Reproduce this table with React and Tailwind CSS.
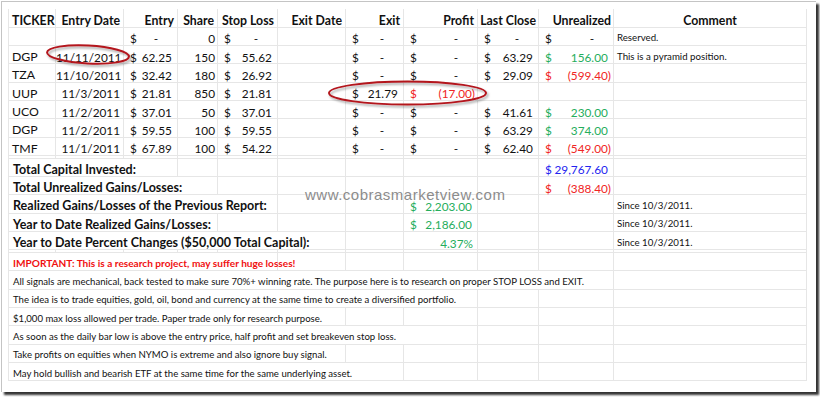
import React from 'react';

const GREEN = 'text-[#25ad5c]';
const RED = 'text-[#f02424]';
const BLUE = 'text-[#2424f0]';

const cols = ['w-[47px]', 'w-[68px]', 'w-[54px]', 'w-[40px]', 'w-[60px]', 'w-[68px]', 'w-[58px]', 'w-[74px]', 'w-[61px]', 'w-[75px]', 'w-[193px]'];

const rows = [
  { t: '', d: '', entry: 0, share: '0', stop: 0, exit: 0, profit: 0, last: 0, unr: 0, comment: 'Reserved.' },
  { t: 'DGP', d: '11/11/2011', entry: '62.25', share: '150', stop: '55.62', exit: 0, profit: 0, last: '63.29', unr: '156.00', unrColor: GREEN, comment: 'This is a pyramid position.' },
  { t: 'TZA', d: '11/10/2011', entry: '32.42', share: '180', stop: '26.92', exit: 0, profit: 0, last: '29.09', unr: '(599.40)', unrColor: RED },
  { t: 'UUP', d: '11/3/2011', entry: '21.81', share: '850', stop: '21.81', exit: '21.79', profit: '(17.00)', profitColor: RED, last: null, unr: null },
  { t: 'UCO', d: '11/2/2011', entry: '37.01', share: '50', stop: '37.01', exit: 0, profit: 0, last: '41.61', unr: '230.00', unrColor: GREEN },
  { t: 'DGP', d: '11/2/2011', entry: '59.55', share: '100', stop: '59.55', exit: 0, profit: 0, last: '63.29', unr: '374.00', unrColor: GREEN },
  { t: 'TMF', d: '11/1/2011', entry: '67.89', share: '100', stop: '54.22', exit: 0, profit: 0, last: '62.40', unr: '(549.00)', unrColor: RED },
];

// accounting style: "$" flush left, value flush right, zero shown as a dash
const Money = ({ v, color = '' }) => {
  if (v === null || v === undefined) return null;
  const neg = typeof v === 'string' && v.startsWith('(');
  return (
    <div className={`flex justify-between pl-[6px] pr-[2px] font-normal text-[11.8px] ${color}`}>
      <span>$</span>
      {v === 0 ? (
        <span>-<span className="invisible">00)</span></span>
      ) : (
        <span>{v}{!neg && <span className="invisible">)</span>}</span>
      )}
    </div>
  );
};

const Td = ({ children, className = '', span }) => (
  <td colSpan={span} className={`border border-[#e6e6e6] align-bottom pb-0 leading-none whitespace-nowrap ${className}`}>
    {children}
  </td>
);

const Empty = ({ n }) => Array.from({ length: n }).map((_, i) => <Td key={i} />);

const Sep = () => (
  <tr className="h-[2.6px]">
    {cols.map((_, i) => (
      <td key={i} className="border border-[#e6e6e6] p-0 text-[0px] leading-[0]" />
    ))}
  </tr>
);

const notes = [
  { text: 'All signals are mechanical, back tested to make sure 70%+ winning rate. The purpose here is to research on proper STOP LOSS and EXIT.', span: 10 },
  { text: 'The idea is to trade equities, gold, oil, bond and currency at the same time to create a diversified portfolio.', span: 8 },
  { text: '$1,000 max loss allowed per trade. Paper trade only for research purpose.', span: 6 },
  { text: 'As soon as the daily bar low is above the entry price, half profit and set breakeven stop loss.', span: 8 },
  { text: 'Take profits on equities when NYMO is extreme and also ignore buy signal.', span: 6 },
  { text: 'May hold bullish and bearish ETF at the same time for the same underlying asset.', span: 7 },
];

export default function App() {
  return (
    <div className="relative w-[820px] h-[397px] bg-white overflow-hidden font-['Lato',sans-serif] text-[#111]">
      <div className="ml-[1px] mt-[1px] w-[815px] h-[391px] bg-white border-t border-l border-[#c4c4c4] shadow-[3px_3px_2px_rgba(0,0,0,0.8)] pl-[6px] pt-[7px]">
        <table className="table-fixed border-collapse w-[798px] text-[11.8px]">
          <colgroup>
            {cols.map((c, i) => <col key={i} className={c} />)}
          </colgroup>
          <tbody>
            <tr className="h-[18.3px] font-bold text-[12.3px]">
              <Td className="border-t-0 text-left pl-[3px]">TICKER</Td>
              <Td className="border-t-0 text-right pr-[3px]">Entry Date</Td>
              <Td className="border-t-0 text-right pr-[3px]">Entry</Td>
              <Td className="border-t-0 text-right pr-[3px]">Share</Td>
              <Td className="border-t-0 text-right pr-[3px]">Stop Loss</Td>
              <Td className="border-t-0 text-right pr-[3px]">Exit Date</Td>
              <Td className="border-t-0 text-right pr-[3px]">Exit</Td>
              <Td className="border-t-0 text-right pr-[3px]">Profit</Td>
              <Td className="border-t-0 text-right pr-[2px]">Last Close</Td>
              <Td className="border-t-0 text-right pr-[2px]">Unrealized</Td>
              <Td className="border-t-0 text-center">Comment</Td>
            </tr>
            {rows.map((r, i) => (
              <tr key={i} className="h-[18.33px]">
                <Td className="pl-[3px] text-[12.3px]">{r.t}</Td>
                <Td className="text-right pr-[3px]">{r.d}</Td>
                <Td><Money v={r.entry} /></Td>
                <Td className="text-right pr-[2px]">{r.share}</Td>
                <Td><Money v={r.stop} /></Td>
                <Td />
                <Td><Money v={r.exit} /></Td>
                <Td><Money v={r.profit} color={r.profitColor} /></Td>
                <Td><Money v={r.last} /></Td>
                <Td><Money v={r.unr} color={r.unrColor} /></Td>
                <Td className="pl-[3px] pb-[2px] text-[9.7px]">{r.comment}</Td>
              </tr>
            ))}
            <Sep />
            <tr className="h-[18.33px] font-bold text-[12.5px]">
              <Td span={3} className="pl-[4px]">Total Capital Invested:</Td>
              <Empty n={6} />
              <Td><Money v="29,767.60" color={BLUE} /></Td>
              <Td />
            </tr>
            <tr className="h-[18.33px] font-bold text-[12.5px]">
              <Td span={4} className="pl-[4px]">Total Unrealized Gains/Losses:</Td>
              <Empty n={5} />
              <Td><Money v="(388.40)" color={RED} /></Td>
              <Td />
            </tr>
            <tr className="h-[18.33px] font-bold text-[12.5px]">
              <Td span={5} className="pl-[4px]">Realized Gains/Losses of the Previous Report:</Td>
              <Empty n={2} />
              <Td><Money v="2,203.00" color={GREEN} /></Td>
              <Empty n={2} />
              <Td className="font-normal pl-[3px] pb-[2px] text-[9.7px]">Since 10/3/2011.</Td>
            </tr>
            <tr className="h-[18.33px] font-bold text-[12.5px]">
              <Td span={4} className="pl-[4px]">Year to Date Realized Gains/Losses:</Td>
              <Empty n={3} />
              <Td><Money v="2,186.00" color={GREEN} /></Td>
              <Empty n={2} />
              <Td className="font-normal pl-[3px] pb-[2px] text-[9.7px]">Since 10/3/2011.</Td>
            </tr>
            <tr className="h-[18.33px] font-bold text-[12.5px]">
              <Td span={6} className="pl-[4px]">Year to Date Percent Changes ($50,000 Total Capital):</Td>
              <Empty n={1} />
              <Td className={`font-normal text-[11.8px] text-right pr-[4px] ${GREEN}`}>4.37%</Td>
              <Empty n={2} />
              <Td className="font-normal pl-[3px] pb-[2px] text-[9.7px]">Since 10/3/2011.</Td>
            </tr>
            <Sep />
            <tr className="h-[18.33px]">
              <Td span={5} className="pl-[4px] pb-[2px] font-bold text-[10.1px] text-[#f01010]">IMPORTANT: This is a research project, may suffer huge losses!</Td>
              <Empty n={6} />
            </tr>
            {notes.map((n, i) => (
              <tr key={i} className="h-[18.33px]">
                <Td span={n.span} className="pl-[4px] pb-[2px] text-[9.6px]">{n.text}</Td>
                <Empty n={11 - n.span} />
              </tr>
            ))}
          </tbody>
        </table>
      </div>

      {/* watermark */}
      <div className="absolute left-[305px] top-[187px] font-['Liberation_Sans',Arial,sans-serif] text-[15px] leading-none tracking-[0.5px] text-[#8c8c8c] [text-shadow:0_0_2px_#fff]">
        www.cobrasmarketview.com
      </div>

      {/* hand-drawn highlight ellipses */}
      <svg className="absolute inset-0 pointer-events-none" width="820" height="397">
        <defs>
          <filter id="sh" x="-10%" y="-50%" width="120%" height="200%">
            <feDropShadow dx="1.5" dy="2" stdDeviation="1" floodColor="#000" floodOpacity="0.35" />
          </filter>
        </defs>
        <g fill="none" stroke="#b3141c" strokeWidth="2" filter="url(#sh)">
          <ellipse cx="88" cy="54.5" rx="41" ry="9" transform="rotate(3 88 54.5)" />
          <ellipse cx="407.5" cy="93" rx="78.5" ry="11.5" />
        </g>
      </svg>
    </div>
  );
}
